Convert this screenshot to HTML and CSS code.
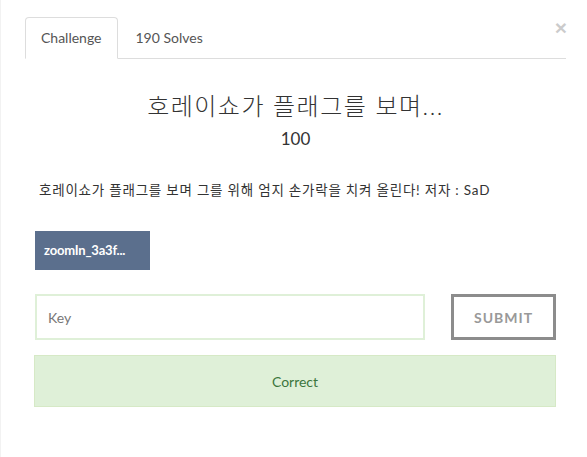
FILE: index.html
```html
<!DOCTYPE html>
<html lang="ko">
<head>
<meta charset="utf-8">
<link rel="stylesheet" href="styles.css">
</head>
<body>
<div class="modal">
  <button class="close" aria-label="Close">&times;</button>
  <ul class="tabs">
    <li class="tab active">Challenge</li>
    <li class="tab">190 Solves</li>
  </ul>
  <div class="content">
    <h3 class="title">호레이쇼가 플래그를 보며...</h3>
    <div class="value">100</div>
    <p class="desc">호레이쇼가 플래그를 보며 그를 위해 엄지 손가락을 치켜 올린다! 저자 : SaD</p>
    <div class="files"><a class="file-btn">zoomIn_3a3f...</a></div>
    <form class="submit-row">
      <input class="key" type="text" placeholder="Key">
      <button class="submit" type="button">SUBMIT</button>
    </form>
    <div class="alert">Correct</div>
  </div>
</div>
</body>
</html>
```
FILE: styles.css
```css
* { box-sizing: border-box; }
html, body { margin: 0; padding: 0; background: #fff; }
body {
  font-family: Lato, "Noto Sans CJK KR", sans-serif;
  font-size: 14px;
  color: #333;
}
.modal {
  position: relative;
  min-height: 457px;
  padding: 17px 21px 0 24px;
  border-left: 1px solid #f2f2f2;
}
.close {
  position: absolute;
  top: 17px;
  right: 20px;
  border: 0;
  background: none;
  padding: 0;
  font-family: "Liberation Sans", sans-serif;
  font-size: 21px;
  font-weight: bold;
  line-height: 21px;
  color: #000;
  opacity: 0.2;
}
.tabs {
  list-style: none;
  margin: 0;
  padding: 0;
  display: flex;
  border-bottom: 1px solid #ddd;
}
.tab {
  padding: 10px 15px;
  line-height: 20px;
  margin-right: 2px;
  margin-bottom: -1px;
  border: 1px solid transparent;
  border-radius: 4px 4px 0 0;
  color: #555;
}
.tab.active {
  border-color: #ddd;
  border-bottom-color: #fff;
  background: #fff;
}
.content {
  padding: 0 10px;
}
.title {
  margin: 34px 0 0;
  text-align: center;
  font-size: 24px;
  font-weight: 300;
  letter-spacing: 1.5px;
  line-height: 1.1;
  color: #333;
}
.value {
  margin-top: 11px;
  text-align: center;
  font-size: 17px;
  line-height: 1.1;
  color: #333;
}
.desc {
  margin: 31px 0 0;
  padding-left: 4px;
  font-size: 13.5px;
  letter-spacing: 0.78px;
  line-height: 20px;
  color: #333;
}
.files {
  margin-top: 31px;
  display: flex;
}
.file-btn {
  display: block;
  width: 115px;
  height: 39px;
  line-height: 39px;
  padding: 0 9px;
  background: #5b6f8d;
  color: #fff;
  font-weight: bold;
  font-size: 13px;
  letter-spacing: -0.2px;
  white-space: nowrap;
  overflow: hidden;
}
.submit-row {
  margin: 24px 0 0;
  display: flex;
  justify-content: space-between;
}
.key {
  width: 390px;
  height: 46px;
  border: 2px solid #dff0d8;
  padding: 0 11px;
  font-family: Lato, sans-serif;
  font-size: 14px;
  color: #555;
  outline: none;
}
.key::placeholder { color: #777; }
.submit {
  width: 105px;
  height: 46px;
  border: 3px solid #8c8c8c;
  background: #fff;
  font-family: Lato, sans-serif;
  font-weight: bold;
  font-size: 14px;
  letter-spacing: 1px;
  color: #999;
}
.alert {
  margin: 15px 0 0 -1px;
  height: 52px;
  display: flex;
  align-items: center;
  justify-content: center;
  background: #dff0d8;
  border: 1px solid #d6e9c6;
  color: #3c763d;
  font-size: 14px;
}
```
